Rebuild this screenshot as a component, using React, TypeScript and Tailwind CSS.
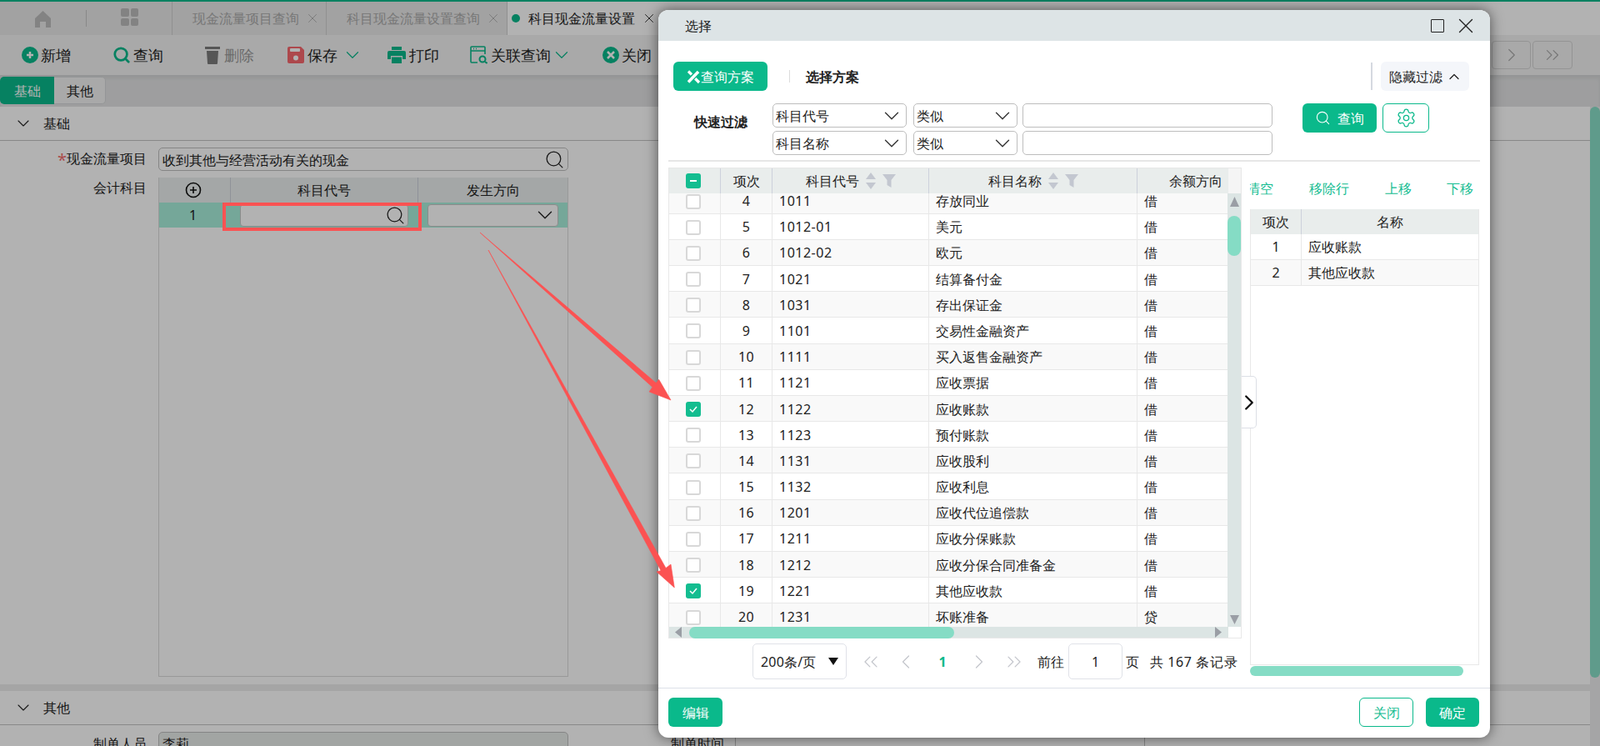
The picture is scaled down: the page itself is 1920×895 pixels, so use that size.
import { ChevronDown, ChevronLeft, ChevronRight, ChevronUp, ChevronsLeft, ChevronsRight, Search, Settings, X } from 'lucide-react';

const GREEN = '#0ab98b';

const rows = [
  { no: 4, code: '1011', name: '存放同业', dir: '借' },
  { no: 5, code: '1012-01', name: '美元', dir: '借' },
  { no: 6, code: '1012-02', name: '欧元', dir: '借' },
  { no: 7, code: '1021', name: '结算备付金', dir: '借' },
  { no: 8, code: '1031', name: '存出保证金', dir: '借' },
  { no: 9, code: '1101', name: '交易性金融资产', dir: '借' },
  { no: 10, code: '1111', name: '买入返售金融资产', dir: '借' },
  { no: 11, code: '1121', name: '应收票据', dir: '借' },
  { no: 12, code: '1122', name: '应收账款', dir: '借', checked: true },
  { no: 13, code: '1123', name: '预付账款', dir: '借' },
  { no: 14, code: '1131', name: '应收股利', dir: '借' },
  { no: 15, code: '1132', name: '应收利息', dir: '借' },
  { no: 16, code: '1201', name: '应收代位追偿款', dir: '借' },
  { no: 17, code: '1211', name: '应收分保账款', dir: '借' },
  { no: 18, code: '1212', name: '应收分保合同准备金', dir: '借' },
  { no: 19, code: '1221', name: '其他应收款', dir: '借', checked: true },
  { no: 20, code: '1231', name: '坏账准备', dir: '贷' },
];

function SortFilter() {
  return (
    <span className="ml-[7px] flex items-center">
      <svg width="14" height="22" viewBox="0 0 14 22" fill="#c3c7d0">
        <path d="M7 1l6 8H1zM7 21l-6-8h12z" />
      </svg>
      <svg className="ml-[7px]" width="16" height="18" viewBox="0 0 16 18" fill="#c3c7d0">
        <path d="M0 1h16l-5.500 7v9l-5-3V8z" />
      </svg>
    </span>
  );
}

function FieldSelect({ label, width }: { label: string; width: string }) {
  return (
    <div className={`flex h-[29px] items-center justify-between rounded-[5px] border border-[#bdbdbd] pl-[3px] pr-[2px] text-[#222] ${width}`}>
      <span>{label}</span>
      <ChevronDown size={30} strokeWidth={1.100} color="#333" />
    </div>
  );
}

function ToolButton({ icon, label, className, gray, caret, gap = 'ml-[3px]', caretGap = 'ml-[5px]' }: { icon: React.ReactNode; label: string; className: string; gray?: boolean; caret?: boolean; gap?: string; caretGap?: string }) {
  return (
    <div className={`flex items-center ${className}`}>
      {icon}
      <span className={`text-[18px] ${gap} ${gray ? 'text-[#999]' : 'text-[#222]'}`}>{label}</span>
      {caret && <ChevronDown className={caretGap} size={26} strokeWidth={1.100} color={GREEN} />}
    </div>
  );
}

function Box({ checked }: { checked?: boolean }) {
  if (checked) {
    return (
      <span className="mt-[2px] flex h-[18px] w-[18px] items-center justify-center rounded-[3px] bg-[#13bd90]">
        <svg width="12" height="10" viewBox="0 0 12 10" fill="none" stroke="#fff" strokeWidth="1.500">
          <path d="M2 5l3 3 5-6" />
        </svg>
      </span>
    );
  }
  return <span className="mt-[2px] block h-[18px] w-[18px] rounded-[3px] border-2 border-[#d8d8d8] bg-white" />;
}

export default function App() {
  return (
    <div className="relative h-[895px] w-[1920px] overflow-hidden bg-white font-['Noto_Sans_CJK_SC',sans-serif] text-[16px] leading-none text-[#222]">
      {/* Page behind the dialog */}
      <div className="h-[2px] bg-[#0ab98b]" />
      <div className="flex h-[40px] bg-[#e9e9e9]">
        <svg className="ml-[42px] mt-[11px]" width="19" height="20" viewBox="0 0 19 20" fill="#bcbcbc">
          <path d="M9.500 0L19 9v11h-6v-7H6v7H0V9z" />
        </svg>
        <div className="ml-[42px] mt-[10px] h-[20px] w-px bg-[#c4c4c4]" />
        <div className="ml-[41px] mt-[8px] grid h-[21px] w-[21px] grid-cols-2 gap-[2px]">
          <span className="rounded-[2px] bg-[#bcbcbc]" />
          <span className="rounded-[2px] bg-[#bcbcbc]" />
          <span className="rounded-[2px] bg-[#bcbcbc]" />
          <span className="rounded-[2px] bg-[#bcbcbc]" />
        </div>
        <div className="ml-[40px] flex w-[185px] items-center border-l border-[#cfcfcf] pl-[24px] text-[#ababab]">
          <span>现金流量项目查询</span>
          <X className="ml-[7px]" size={18} strokeWidth={1.200} />
        </div>
        <div className="flex w-[217px] items-center border-l border-[#cfcfcf] pl-[24px] text-[#ababab]">
          <span>科目现金流量设置查询</span>
          <X className="ml-[7px]" size={18} strokeWidth={1.200} />
        </div>
        <div className="flex flex-1 items-center border-l border-[#cfcfcf] bg-white pl-[5px]">
          <span className="h-[10px] w-[10px] rounded-full bg-[#0ab98b]" />
          <span className="ml-[10px]">科目现金流量设置</span>
          <X className="ml-[8px]" size={18} strokeWidth={1.200} />
        </div>
      </div>
      <div className="flex h-[48px] items-center bg-[#f2f2f2] pl-[26px]">
        <ToolButton
          className=""
          label="新增"
          icon={
            <svg width="20" height="20" viewBox="0 0 20 20">
              <circle cx="10" cy="10" r="10" fill={GREEN} />
              <path d="M10 6v8M6 10h8" stroke="#fff" strokeWidth="2.500" />
            </svg>
          }
        />
        <ToolButton className="ml-[50px]" label="查询" icon={<Search size={22} strokeWidth={3} color={GREEN} />} />
        <ToolButton
          className="ml-[50px]"
          label="删除"
          gray
          gap="ml-[5px]"
          icon={
            <svg width="18" height="21" viewBox="0 0 18 21" fill="#7b7b7b">
              <path d="M0 0h18v3H0zM2 5h14l-1 15a1 1 0 0 1-1 1H4a1 1 0 0 1-1-1z" />
            </svg>
          }
        />
        <ToolButton
          className="ml-[40px]"
          label="保存"
          caret
          gap="ml-[4px]"
          icon={
            <svg width="20" height="20" viewBox="0 0 20 20">
              <path d="M2 0h14l4 4v14a2 2 0 0 1-2 2H2a2 2 0 0 1-2-2V2a2 2 0 0 1 2-2z" fill="#f8686e" />
              <rect x="3" y="2" width="12" height="4" rx="1" fill="#fff" />
              <circle cx="10" cy="13.500" r="3" fill="#fff" />
            </svg>
          }
        />
        <ToolButton
          className="ml-[29px]"
          label="打印"
          gap="ml-[4px]"
          icon={
            <svg width="22" height="20" viewBox="0 0 22 20" fill={GREEN}>
              <path d="M5 0h12v4H5zM2 5h18a2 2 0 0 1 2 2v8h-4v-4H4v4H0V7a2 2 0 0 1 2-2zM5 12.500h12V20H5z" />
            </svg>
          }
        />
        <ToolButton
          className="ml-[37px]"
          label="关联查询"
          caret
          gap="ml-[4px]"
          caretGap="ml-[0px]"
          icon={
            <svg width="21" height="22" viewBox="0 0 21 22" fill="none" stroke={GREEN} strokeWidth="1.600">
              <path d="M9 20H2a1 1 0 0 1-1-1V2a1 1 0 0 1 1-1h15a1 1 0 0 1 1 1v8M1 6h17M4 3.500h1M7 3.500h1" />
              <circle cx="15" cy="16" r="3.500" strokeWidth="2" />
              <path d="M18 19l2.500 2" strokeWidth="2" />
            </svg>
          }
        />
        <ToolButton
          className="ml-[36px]"
          label="关闭"
          icon={
            <svg width="20" height="20" viewBox="0 0 20 20">
              <circle cx="10" cy="10" r="10" fill={GREEN} />
              <path d="M6 6l8 8M14 6l-8 8" stroke="#fff" strokeWidth="2.500" />
            </svg>
          }
        />
        <div className="ml-auto mr-[33px] flex gap-[2px]">
          <div className="flex h-[34px] w-[47px] items-center justify-center rounded-[4px] border border-[#d5d5d5]">
            <ChevronLeft size={26} strokeWidth={1.100} color="#aaa" />
          </div>
          <div className="flex h-[34px] w-[47px] items-center justify-center rounded-[4px] border border-[#d5d5d5]">
            <ChevronRight size={26} strokeWidth={1.100} color="#aaa" />
          </div>
          <div className="flex h-[34px] w-[48px] items-center justify-center rounded-[4px] border border-[#d5d5d5]">
            <ChevronsRight size={26} strokeWidth={1.100} color="#aaa" />
          </div>
        </div>
      </div>
      <div className="flex h-[38px] bg-[#e2e3e4] pt-[2px] shadow-[inset_0_4px_4px_rgba(0,0,0,0.06)]">
        <div className="flex h-[33px] w-[65px] items-center justify-center rounded-l-[5px] bg-[#0ab98b] text-white">基础</div>
        <div className="flex h-[33px] w-[62px] items-center justify-center rounded-r-[5px] border border-l-0 border-[#d5d6d8] bg-[#f2f2f2]">其他</div>
      </div>
      <div className="flex h-[767px]">
        <div className="w-[1908px]">
          <div className="flex h-[41px] items-center border-b border-[#c3c3c3] pl-[16px]">
            <ChevronDown size={24} strokeWidth={1.100} />
            <span className="ml-[12px]">基础</span>
          </div>
          <div className="mt-[8px] flex items-center">
            <label className="w-[176px] pt-[2px] text-right">
              <span className="align-[-3px] text-[20px] text-[#f56c6c]">*</span>现金流量项目
            </label>
            <div className="ml-[14px] flex h-[28px] w-[492px] items-center justify-between rounded-[5px] border border-[#bfbfbf] pl-[4px] pr-[3px]">
              <span className="pt-[2px]">收到其他与经营活动有关的现金</span>
              <Search size={25} strokeWidth={1.200} />
            </div>
          </div>
          <div className="mt-[8px] flex">
            <label className="mt-[4px] w-[176px] text-right">会计科目</label>
            <div className="ml-[14px] h-[599px] w-[492px] border border-t-0 border-[#dcdcdc]">
              <div className="flex h-[30px] items-center bg-[#ebf0ef]">
                <div className="flex h-full w-[85px] items-center justify-center pr-[3px]">
                  <svg width="20" height="20" viewBox="0 0 20 20" fill="none" stroke="#111" strokeWidth="1.600">
                    <circle cx="10" cy="10" r="8.500" />
                    <path d="M10 6v8M6 10h8" />
                  </svg>
                </div>
                <div className="flex h-full w-[225px] items-center justify-center border-l border-[#cdd1dc]">科目代号</div>
                <div className="flex h-full flex-1 items-center justify-center border-l border-[#cdd1dc]">发生方向</div>
              </div>
              <div className="flex h-[30px] items-center bg-[#a8f0dc]">
                <div className="w-[81px] text-center">1</div>
                <div className="ml-[16px] flex h-[27px] w-[202px] items-center justify-end rounded-[4px] border border-[#c8c8c8] bg-white pr-[2px]">
                  <Search size={25} strokeWidth={1.200} />
                </div>
                <div className="ml-[23px] flex h-[27px] w-[157px] items-center justify-end rounded-[4px] border border-[#c8c8c8] bg-white">
                  <ChevronDown size={30} strokeWidth={1.100} />
                </div>
              </div>
            </div>
          </div>
          <div className="mt-[9px] h-[8px] bg-[#eceded]" />
          <div className="flex h-[41px] items-center border-b border-[#c3c3c3] pl-[16px]">
            <ChevronDown size={24} strokeWidth={1.100} />
            <span className="ml-[12px]">其他</span>
          </div>
          <div className="mt-[8px] flex">
            <label className="mt-[6px] w-[176px] text-right">制单人员</label>
            <div className="ml-[14px] h-[28px] w-[492px] rounded-[5px] border border-[#bfbfbf] bg-[#e9ecea] pl-[4px] pt-[5px]">李莉</div>
            <label className="ml-[123px] mt-[6px]">制单时间</label>
            <div className="ml-[13px] h-[28px] w-[492px] border border-[#bfbfbf]" />
          </div>
        </div>
        <div className="flex-1 bg-[#ecedee]">
          <div className="h-[685px] rounded-full bg-[#88dec7]" />
        </div>
      </div>

      <div className="absolute inset-0 bg-black/30" />

      {/* Dialog */}
      <div className="absolute left-[790px] top-[12px] flex h-[873px] w-[998px] flex-col rounded-[12px] bg-white shadow-[0_0_16px_rgba(0,0,0,0.55)]">
        <div className="flex h-[37px] items-center rounded-t-[12px] bg-[#dde4e6] pl-[32px] pr-[14px]">
          <span>选择</span>
          <span className="ml-auto h-[16px] w-[16px] rounded-[1px] border-[1.5px] border-[#222]" />
          <X className="ml-[11px]" size={30} strokeWidth={1.100} />
        </div>
        <div className="mt-[25px] flex h-[35px] items-center pl-[18px] pr-[25px]">
          <div className="flex h-[35px] w-[113px] items-center justify-center rounded-[6px] bg-[#0ab98b] text-white">
            <svg width="17" height="18" viewBox="0 0 17 18" fill="none">
              <path d="M2 2.500l4 4M10 11l5 5" stroke="#fff" strokeWidth="3.200" />
              <path d="M2 15.500L14 3" stroke="#0ab98b" strokeWidth="6" />
              <path d="M2 15.500L14 3" stroke="#fff" strokeWidth="3.500" />
            </svg>
            <span>查询方案</span>
          </div>
          <span className="ml-[26px] h-[15px] w-px bg-[#dcdcdc]" />
          <span className="ml-[19px] font-bold">选择方案</span>
          <span className="ml-auto h-[33px] w-[2px] bg-[#d5d9e0]" />
          <div className="ml-[10px] flex h-[35px] w-[106px] items-center rounded-[6px] bg-[#f4f6fa] pl-[10px]">
            <span>隐藏过滤</span>
            <ChevronUp className="ml-[4px]" size={20} strokeWidth={1.500} />
          </div>
        </div>
        <div className="mt-[15px] flex items-start">
          <span className="ml-[43px] mt-[14px] w-[94px] font-bold">快速过滤</span>
          <div className="flex flex-col gap-[4px]">
            <div className="flex">
              <FieldSelect label="科目代号" width="w-[161px]" />
              <FieldSelect label="类似" width="ml-[8px] w-[125px]" />
              <div className="ml-[6px] h-[29px] w-[300px] rounded-[5px] border border-[#bdbdbd]" />
            </div>
            <div className="flex">
              <FieldSelect label="科目名称" width="w-[161px]" />
              <FieldSelect label="类似" width="ml-[8px] w-[125px]" />
              <div className="ml-[6px] h-[29px] w-[300px] rounded-[5px] border border-[#bdbdbd]" />
            </div>
          </div>
          <div className="ml-[36px] flex h-[35px] w-[89px] items-center justify-center rounded-[6px] bg-[#0ab98b] text-white">
            <Search size={19} strokeWidth={1.400} />
            <span className="ml-[8px]">查询</span>
          </div>
          <div className="ml-[7px] flex h-[35px] w-[56px] items-center justify-center rounded-[6px] border border-[#0ab98b]">
            <Settings size={25} strokeWidth={1.200} color={GREEN} />
          </div>
        </div>
        <div className="mx-[12px] mt-[6px] h-[2px] bg-[#e6e6e6]" />

        <div className="relative mt-[7px] flex h-[624px] px-[12px]">
          {/* Left grid */}
          <div className="w-[688px]">
            <div className="border border-b-0 border-[#e8e8e8]">
              <div className="flex h-[30px] items-center bg-[#e9edec]">
                <div className="flex h-full w-[61px] items-center justify-center pr-[3px]">
                  <span className="flex h-[18px] w-[18px] items-center justify-center rounded-[3px] bg-[#13bd90]">
                    <span className="h-[2px] w-[8px] bg-white" />
                  </span>
                </div>
                <div className="flex h-full w-[62px] items-center justify-center border-l border-[#cdd1dc]">项次</div>
                <div className="flex h-full w-[188px] items-center justify-center border-l border-[#cdd1dc]">
                  科目代号
                  <SortFilter />
                </div>
                <div className="flex h-full w-[250px] items-center justify-center border-l border-[#cdd1dc]">
                  科目名称
                  <SortFilter />
                </div>
                <div className="flex h-full w-[110px] items-center whitespace-nowrap border-l border-[#cdd1dc] pl-[38px]">余额方向</div>
                <div className="h-full flex-1 bg-[#f5f5f5]" />
              </div>
              <div className="flex h-[520px]">
                <div className="h-full w-[671px] overflow-hidden">
                  <div className="-mt-[6.6px]">
                    {rows.map((r, i) => (
                      <div key={r.no} className={`flex h-[31.2px] items-center border-b border-[#e8e8e8] ${i % 2 === 0 ? 'bg-[#f9f9f9]' : 'bg-white'}`}>
                        <div className="flex h-full w-[61px] items-center justify-center pr-[3px]">
                          <Box checked={r.checked} />
                        </div>
                        <div className="flex h-full w-[62px] items-center justify-center border-l border-[#e8e8e8] pt-px tracking-[0.4px]">{r.no}</div>
                        <div className="flex h-full w-[188px] items-center border-l border-[#e8e8e8] pl-[8px] pt-px tracking-[0.5px]">{r.code}</div>
                        <div className="flex h-full w-[250px] items-center border-l border-[#e8e8e8] pl-[8px] pt-px">{r.name}</div>
                        <div className="flex h-full flex-1 items-center border-l border-[#e8e8e8] pl-[8px] pt-px">{r.dir}</div>
                      </div>
                    ))}
                  </div>
                </div>
                <div className="flex w-[16px] flex-col items-center bg-[#dce5e4]">
                  <svg className="mt-[4px]" width="11" height="12" viewBox="0 0 11 12" fill="#9a9ea5">
                    <path d="M5.500 0L11 12H0z" />
                  </svg>
                  <div className="mt-[11px] h-[48px] w-full rounded-full bg-[#85dcc5]" />
                  <svg className="mb-[3px] mt-auto" width="11" height="11" viewBox="0 0 11 11" fill="#9a9ea5">
                    <path d="M5.500 11L0 0h11z" />
                  </svg>
                </div>
              </div>
              <div className="flex h-[14px] items-center border-b border-[#e8e8e8]">
                <div className="flex h-full w-[671px] items-center bg-[#dce5e4] pl-[7px]">
                  <svg width="8" height="13" viewBox="0 0 8 13" fill="#9a9ea5">
                    <path d="M0 6.500L8 0v13z" />
                  </svg>
                  <div className="ml-[9px] h-[14px] w-[318px] rounded-full bg-[#85dcc5]" />
                  <svg className="ml-auto mr-[8px]" width="8" height="13" viewBox="0 0 8 13" fill="#9a9ea5">
                    <path d="M8 6.500L0 13V0z" />
                  </svg>
                </div>
              </div>
            </div>
            <div className="mt-[6px] flex h-[43px] items-center pl-[101px]">
              <div className="flex h-[43px] w-[113px] items-center rounded-[5px] border border-[#e0e2e8] pl-[9px]">
                <span className="tracking-[0.2px]">200条/页</span>
                <svg className="ml-[14px]" width="12" height="9" viewBox="0 0 12 9" fill="#111">
                  <path d="M0 0h12L6 9z" />
                </svg>
              </div>
              <ChevronsLeft className="ml-[15px]" size={28} strokeWidth={1.100} color="#c4c6cc" />
              <ChevronLeft className="ml-[14px]" size={28} strokeWidth={1.100} color="#c4c6cc" />
              <span className="ml-[20px] w-[20px] text-center font-bold text-[#0ab98b]">1</span>
              <ChevronRight className="ml-[20px]" size={28} strokeWidth={1.100} color="#c4c6cc" />
              <ChevronsRight className="ml-[14px]" size={28} strokeWidth={1.100} color="#c4c6cc" />
              <span className="ml-[14px]">前往</span>
              <div className="ml-[5px] flex h-[43px] w-[65px] items-center justify-center rounded-[5px] border border-[#e0e2e8]">1</div>
              <span className="ml-[4px]">页</span>
              <span className="ml-[13px] whitespace-nowrap tracking-[0.6px]">共 167 条记录</span>
            </div>
          </div>
          {/* Toggle tab */}
          <div className="absolute left-[700px] top-[250px] flex h-[63px] w-[18px] items-center justify-center rounded-r-[5px] border border-l-0 border-[#dcdfe6] bg-white">
            <ChevronRight className="shrink-0" size={30} strokeWidth={1.900} color="#111" />
          </div>
          {/* Right panel */}
          <div className="ml-[10px] w-[275px] overflow-hidden">
            <div className="flex h-[50px] items-center text-[#15bd92]">
              <span className="-ml-[4px] whitespace-nowrap">清空</span>
              <span className="ml-[43px] whitespace-nowrap">移除行</span>
              <span className="ml-[43px] whitespace-nowrap">上移</span>
              <span className="ml-[42px] whitespace-nowrap">下移</span>
            </div>
            <div className="h-[547px] border border-t-0 border-[#e8e8e8]">
              <div className="flex h-[30px] items-center bg-[#e9edec]">
                <div className="w-[60px] text-center">项次</div>
                <div className="flex h-full flex-1 items-center justify-center border-l border-[#cdd1dc]">名称</div>
              </div>
              <div className="flex h-[31px] items-center border-b border-[#e8e8e8] bg-white">
                <div className="w-[60px] text-center">1</div>
                <div className="flex h-full flex-1 items-center border-l border-[#e8e8e8] pl-[8px]">应收账款</div>
              </div>
              <div className="flex h-[31px] items-center border-b border-[#e8e8e8] bg-[#f9f9f9]">
                <div className="w-[60px] text-center">2</div>
                <div className="flex h-full flex-1 items-center border-l border-[#e8e8e8] pl-[8px]">其他应收款</div>
              </div>
            </div>
            <div className="mt-px h-[12px] w-[256px] rounded-full bg-[#85dcc5]" />
          </div>
        </div>

        <div className="flex flex-1 items-start justify-between border-t border-[#dde0e8] pl-[12px] pr-[13px] pt-[11px]">
          <div className="flex h-[35px] w-[65px] items-center justify-center rounded-[6px] bg-[#0ab98b] text-white">编辑</div>
          <div className="flex">
            <div className="flex h-[35px] w-[65px] items-center justify-center rounded-[6px] border border-[#0ab98b] text-[#15bd92]">关闭</div>
            <div className="ml-[15px] flex h-[35px] w-[64px] items-center justify-center rounded-[6px] bg-[#0ab98b] text-white">确定</div>
          </div>
        </div>
      </div>

      {/* Red annotations */}
      <div className="absolute left-[267px] top-[243px] h-[34px] w-[239px] border-[4px] border-[#fb5252]" />
      <svg className="absolute left-0 top-0" width="1920" height="895" fill="#fb5252" stroke="#fb5252" strokeWidth="0.600" strokeLinejoin="round">
        <path d="M576 279L787.300 459.500L790.700 455.300L805 480L779 470L783 464.500z" />
        <path d="M586 300L799 681.500L805 677L809.300 705L788 686L793 684.600z" />
      </svg>
    </div>
  );
}
